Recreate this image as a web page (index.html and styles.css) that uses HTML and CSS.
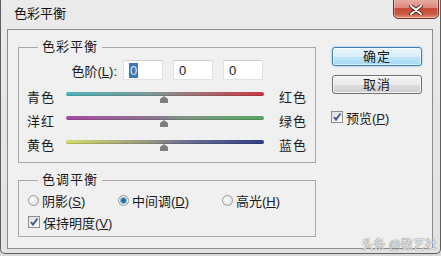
FILE: index.html
```html
<!DOCTYPE html>
<html lang="zh-CN">
<head>
  <meta charset="UTF-8" />
  <title>色彩平衡</title>
  <link rel="stylesheet" href="styles.css">
</head>
<body>
  <div class="window">
    <div class="titlebar">
      <span class="title">色彩平衡</span>
      <span class="close" aria-label="关闭">
        <svg width="14" height="10" viewBox="0 0 14 10"><path d="M2 1 L12 9 M12 1 L2 9" stroke="#5a2218" stroke-width="4" stroke-linecap="round"/><path d="M2 1 L12 9 M12 1 L2 9" stroke="#fff" stroke-width="2.2" stroke-linecap="round"/></svg>
      </span>
    </div>

    <div class="client">
      <div class="left">
        <div class="group balance">
          <span class="legend">色彩平衡</span>
          <div class="levels">
            <span class="levels-label">色阶(<u>L</u>):</span>
            <span class="field"><span class="sel">0</span></span>
            <span class="field">0</span>
            <span class="field">0</span>
          </div>
          <div class="sliders">
            <div class="slider-row">
              <span class="from">青色</span>
              <div class="track"><div class="line cyan-red"></div><svg class="thumb" width="10" height="7" viewBox="0 0 10 7"><path d="M1 7 L1 3 L5 0 L9 3 L9 7 Z" fill="#7d7d7d"/></svg></div>
              <span class="to">红色</span>
            </div>
            <div class="slider-row">
              <span class="from">洋红</span>
              <div class="track"><div class="line magenta-green"></div><svg class="thumb" width="10" height="7" viewBox="0 0 10 7"><path d="M1 7 L1 3 L5 0 L9 3 L9 7 Z" fill="#7d7d7d"/></svg></div>
              <span class="to">绿色</span>
            </div>
            <div class="slider-row">
              <span class="from">黄色</span>
              <div class="track"><div class="line yellow-blue"></div><svg class="thumb" width="10" height="7" viewBox="0 0 10 7"><path d="M1 7 L1 3 L5 0 L9 3 L9 7 Z" fill="#7d7d7d"/></svg></div>
              <span class="to">蓝色</span>
            </div>
          </div>
        </div>

        <div class="group tone">
          <span class="legend">色调平衡</span>
          <div class="radios">
            <span class="radio r-shadow"><span class="dot"></span><span>阴影(<u>S</u>)</span></span>
            <span class="radio r-mid"><span class="dot on"></span><span>中间调(<u>D</u>)</span></span>
            <span class="radio"><span class="dot"></span><span>高光(<u>H</u>)</span></span>
          </div>
          <span class="check"><span class="box"><svg width="10" height="10" viewBox="0 0 10 10"><path d="M2 5 L4 7.5 L8.5 1.5" fill="none" stroke="#4b5c8c" stroke-width="2"/></svg></span><span>保持明度(<u>V</u>)</span></span>
        </div>
      </div>

      <div class="right">
        <span class="btn default">确定</span>
        <span class="btn">取消</span>
        <span class="check preview"><span class="box"><svg width="10" height="10" viewBox="0 0 10 10"><path d="M2 5 L4 7.5 L8.5 1.5" fill="none" stroke="#4b5c8c" stroke-width="2"/></svg></span><span>预览(<u>P</u>)</span></span>
      </div>
    </div>

    <span class="watermark">头条 @数艺社</span>
  </div>
</body>
</html>
```

FILE: styles.css
```css
/* Reset */
* { margin: 0; padding: 0; box-sizing: border-box; }
body { background: #d9d9d9; font-family: "Liberation Sans", "Noto Sans CJK SC", sans-serif; font-size: 13px; color: #1a1a1a; }
u { text-decoration: underline; text-underline-offset: 1px; }

/* Window frame */
.window { position: relative; width: 441px; height: 254px; padding: 0 7px 4px 6px; background: linear-gradient(to bottom, #ebebeb, #e6e6e6 40%, #e2e2e2); border: 1px solid #5e5e5e; border-top: none; border-radius: 0 0 5px 5px; }
.titlebar { position: relative; height: 29px; }
.title { position: absolute; left: 7px; top: 6px; line-height: 16px; font-size: 13px; color: #111; }
.close { position: absolute; left: 386px; top: -2px; width: 46px; height: 21px; display: flex; align-items: center; justify-content: center; padding-top: 2px; border: 1px solid #6d3026; border-radius: 0 0 5px 5px; background: linear-gradient(to bottom, #eab0a4, #dc8a7c 45%, #c84a38 50%, #cc5a45 80%, #e49a80); box-shadow: inset 0 0 0 1px rgba(255,255,255,0.35); }

/* Client area */
.client { display: flex; gap: 16px; height: 220px; padding: 17px 0 0 10px; background: #f0f0f0; border: 1px solid #8c8c8c; }
.left { width: 298px; display: flex; flex-direction: column; gap: 17px; }
.right { width: 90px; display: flex; flex-direction: column; }

/* Group boxes */
.group { position: relative; border: 1px solid #a8a8a8; }
.legend { position: absolute; left: 19px; top: -9px; padding: 0 4px; line-height: 16px; background: #f0f0f0; letter-spacing: 1px; }
.balance { height: 116px; padding-top: 12px; }
.tone { height: 57px; padding: 11px 0 0 9px; }

/* Levels */
.levels { display: flex; align-items: center; gap: 10px; height: 20px; }
.levels-label { width: 98px; margin-right: -4px; text-align: right; }
.field { width: 40px; height: 20px; padding-left: 5px; line-height: 20px; background: #fff; border: 1px solid #e2e2e2; border-top-color: #cfcfcf; }
.sel { display: inline-block; line-height: 15px; padding: 0 1px; background: #3d77b0; color: #d8ecff; }

/* Sliders */
.sliders { margin-top: 12px; padding-left: 8px; }
.slider-row { display: flex; height: 24px; }
.from, .to { line-height: 12px; letter-spacing: 1px; }
.from { width: 39px; }
.to { margin-left: 15px; }
.track { position: relative; width: 198px; }
.line { height: 4px; border-radius: 2px; box-shadow: inset 0 -1px 0 rgba(0,0,0,0.15); }
.cyan-red { background: linear-gradient(to right, #4fb5bb, #7f9696 45%, #9b7a7e 60%, #c83a45); }
.magenta-green { background: linear-gradient(to right, #a94aa3, #8a7690 45%, #7f9583 60%, #55a862); }
.yellow-blue { background: linear-gradient(to right, #d4dc6a, #9a9a80 40%, #6c7090 60%, #2e3f86); }
.thumb { position: absolute; left: 93px; top: 4px; }

/* Radios and checkboxes */
.radios { display: flex; height: 16px; align-items: center; }
.radio { display: flex; align-items: center; gap: 3px; }
.r-shadow { width: 90px; }
.r-mid { width: 104px; }
.dot { width: 11px; height: 11px; border-radius: 50%; border: 1px solid #9a9a9a; background: radial-gradient(circle at 40% 40%, #ffffff, #d6d6d6); }
.dot.on { background: radial-gradient(circle, #1f5c8c 0, #2f79ae 2px, #7fb7d8 3px, #e8f2f8 4px, #dadada 6px); }
.check { display: flex; align-items: center; gap: 3px; height: 16px; }
.tone .check { margin-top: 6px; }
.box { width: 12px; height: 12px; display: flex; align-items: center; justify-content: center; border: 1px solid #8e8f8f; background: linear-gradient(135deg, #dcdcdc, #ffffff); }

/* Buttons */
.btn { display: block; height: 19px; line-height: 17px; text-align: center; letter-spacing: 1px; border: 1px solid #707070; border-radius: 3px; background: linear-gradient(to bottom, #f4f4f4, #ebebeb 50%, #dcdcdc 51%, #d0d0d0); box-shadow: inset 0 0 0 1px rgba(255,255,255,0.7); }
.btn + .btn { margin-top: 9px; }
.btn.default { border-color: #3c7fb1; background: linear-gradient(to bottom, #e8f5fc, #d9effa 50%, #bee6fd 51%, #a7d9f5); box-shadow: inset 0 0 0 1px rgba(255,255,255,0.6), 0 0 2px #6fb3e0; }
.preview { margin-top: 15px; margin-left: -1px; }

/* Watermark */
.watermark { position: absolute; right: 3px; bottom: 1px; font-size: 12px; color: rgba(255,255,255,0.85); text-shadow: 0 0 1px #777, 0 0 1px #777; }
```
